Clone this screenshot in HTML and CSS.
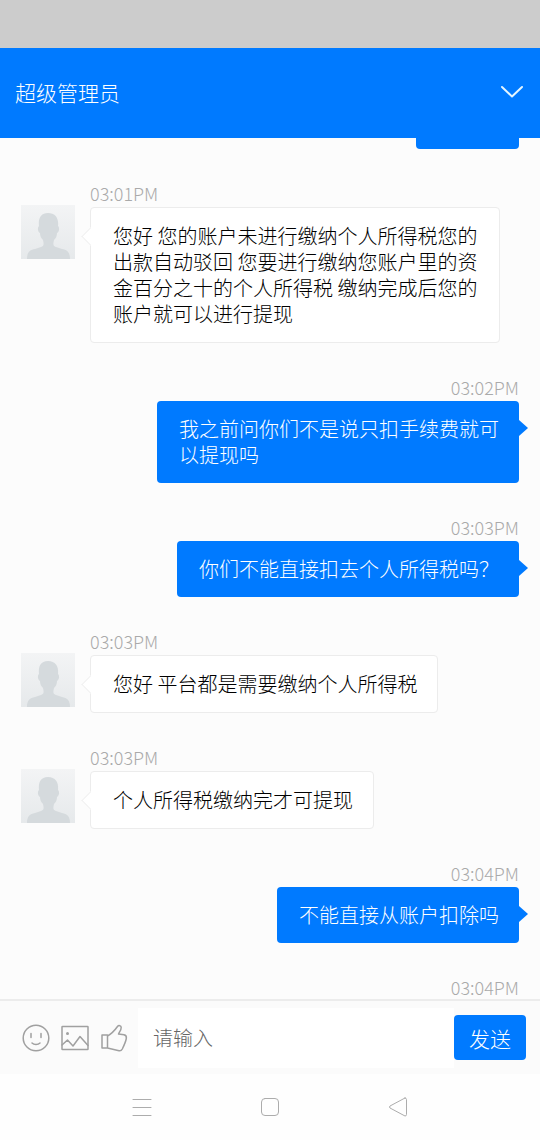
FILE: index.html
```html
<!DOCTYPE html>
<html lang="zh-CN">
<head>
<meta charset="utf-8">
<meta name="viewport" content="width=device-width, initial-scale=1">
<title>超级管理员</title>
<link rel="stylesheet" href="styles.css">
</head>
<body>
<svg class="defs" aria-hidden="true">
  <defs>
    <linearGradient id="avatar-bg" x1="0" y1="0" x2="0" y2="1">
      <stop offset="0" stop-color="#f3f4f5"/>
      <stop offset="1" stop-color="#e6e9eb"/>
    </linearGradient>
    <symbol id="avatar" viewBox="0 0 54 54">
      <rect width="54" height="54" fill="url(#avatar-bg)"/>
      <path d="M6 54c0-7 3-9 8-10l6-2c3-1 3-3 2-7-2-2-3-4-3-7-2-1-3-5-1-7-1-8 2-13 9-13s11 5 10 13c2 2 1 6-1 7 0 3-1 5-3 7-1 4-1 6 2 7l6 2c5 1 8 3 8 10z" fill="#d5dadd"/>
    </symbol>
  </defs>
</svg>
<div class="status-bar"></div>
<header class="header">
  <h1 class="title">超级管理员</h1>
  <button class="collapse" type="button" aria-label="收起">
    <svg width="24" height="14" viewBox="0 0 24 14"><path d="M2 2l10 9.500L22 2"/></svg>
  </button>
</header>
<main class="chat">
  <div class="message message-out">
    <div class="bubble bubble-cut"></div>
  </div>
  <article class="message message-in">
    <time class="time">03:01PM</time>
    <svg class="avatar" role="img" aria-label="头像"><use href="#avatar"/></svg>
    <p class="bubble">您好 您的账户未进行缴纳个人所得税您的出款自动驳回 您要进行缴纳您账户里的资金百分之十的个人所得税 缴纳完成后您的账户就可以进行提现</p>
  </article>
  <article class="message message-out">
    <time class="time">03:02PM</time>
    <p class="bubble">我之前问你们不是说只扣手续费就可以提现吗</p>
  </article>
  <article class="message message-out">
    <time class="time">03:03PM</time>
    <p class="bubble">你们不能直接扣去个人所得税吗？</p>
  </article>
  <article class="message message-in">
    <time class="time">03:03PM</time>
    <svg class="avatar" role="img" aria-label="头像"><use href="#avatar"/></svg>
    <p class="bubble">您好 平台都是需要缴纳个人所得税</p>
  </article>
  <article class="message message-in">
    <time class="time">03:03PM</time>
    <svg class="avatar" role="img" aria-label="头像"><use href="#avatar"/></svg>
    <p class="bubble">个人所得税缴纳完才可提现</p>
  </article>
  <article class="message message-out">
    <time class="time">03:04PM</time>
    <p class="bubble">不能直接从账户扣除吗</p>
  </article>
  <article class="message message-out">
    <time class="time">03:04PM</time>
  </article>
</main>
<form class="composer">
  <div class="tools">
    <button class="tool" type="button" aria-label="表情">
      <svg width="28" height="28" viewBox="0 0 28 28"><circle cx="14" cy="14" r="12.800"/><path d="M9 9.500v4M19 9.500v4M10 19c2 2 6 2 8 0"/></svg>
    </button>
    <button class="tool" type="button" aria-label="图片">
      <svg width="28" height="28" viewBox="0 0 28 28"><rect x="1" y="2.500" width="26" height="23" rx=".5"/><path d="M1 21l5.500-5 5.500 6 7-9.500 8 9"/><circle class="dot" cx="6.500" cy="9.500" r="1.500"/></svg>
    </button>
    <button class="tool" type="button" aria-label="点赞">
      <svg width="28" height="28" viewBox="0 0 28 28"><path d="M2 11h5.500v13H2zM7.500 12c4.500-2.500 7.500-6 10-9.500 1.200-1.500 3.500-1 3.700.8.200 2.200-1.700 4.700-2.700 6.700l5.500.8c2 .5 2.700 1.700 2.300 3.700-.6 3.500-2.300 7-4 10.500-.8 1.500-1.800 2-3.300 1.700L7.500 24"/></svg>
    </button>
  </div>
  <input class="field" type="text" placeholder="请输入" aria-label="请输入">
  <button class="send" type="submit">发送</button>
</form>
<nav class="system-nav" aria-label="系统导航">
  <button class="nav-button" type="button" aria-label="菜单">
    <svg width="20" height="20" viewBox="0 0 20 20"><path d="M1 2.500h18M1 10.500h18M1 18.500h18"/></svg>
  </button>
  <button class="nav-button" type="button" aria-label="主页">
    <svg width="20" height="20" viewBox="0 0 20 20"><rect x="1.500" y="1.500" width="17" height="17" rx="3.500"/></svg>
  </button>
  <button class="nav-button" type="button" aria-label="返回">
    <svg width="20" height="20" viewBox="0 0 20 20"><path d="M17 1L2 9q-1 1 0 2l15 8q1.500 0 1.500-1.500v-15Q18.500 1 17 1z"/></svg>
  </button>
</nav>
</body>
</html>
```
FILE: styles.css
```css
* {
  box-sizing: border-box;
}

body {
  display: flex;
  flex-direction: column;
  height: 100vh;
  margin: 0;
  background: #fcfcfc;
  color: #000;
  font-family: "Noto Sans CJK SC", sans-serif;
  font-size: 20px;
  font-weight: 300;
  line-height: 26px;
}

button,
input {
  padding: 0;
  border: 0;
  background: none;
  font: inherit;
}

svg {
  display: block;
  fill: none;
  stroke-linecap: round;
  stroke-linejoin: round;
}

.defs {
  position: absolute;
  width: 0;
  height: 0;
}

.status-bar {
  flex: none;
  height: 48px;
  background: #ccc;
}

.header {
  display: flex;
  flex: none;
  align-items: center;
  justify-content: space-between;
  height: 90px;
  padding: 0 16px 2px 15px;
  background: #007aff;
  color: #fff;
}

.title {
  margin: 0;
  font-size: 21px;
  font-weight: 300;
}

.collapse svg {
  stroke: #e4f6ff;
  stroke-width: 2;
}

.chat {
  display: flex;
  flex: 1;
  flex-direction: column;
  gap: 32px;
  min-height: 0;
  overflow: hidden;
}

.message {
  display: grid;
  flex: none;
  padding: 0 21px;
}

.message-in {
  grid-template-columns: 54px 1fr;
  column-gap: 15px;
  justify-items: start;
  padding-right: 40px;
}

.message-out {
  justify-items: end;
  padding-left: 157px;
}

.time {
  color: #aaa;
  font-size: 18px;
  line-height: 24px;
}

.message-in .time {
  grid-column: 2;
}

.avatar {
  width: 54px;
  height: 54px;
}

.bubble {
  position: relative;
  margin: 2px 0 0;
  padding: 15px 20px 15px 22px;
  border-radius: 4px;
}

.message-in .bubble {
  border: 1px solid #ececec;
  background: #fff;
}

.message-out .bubble {
  background: #007aff;
  color: #fff;
}

.bubble::after {
  position: absolute;
  content: "";
}

.message-in .bubble::after {
  top: 22px;
  left: -7px;
  width: 12px;
  height: 12px;
  border: solid #f0f0f0;
  border-width: 0 0 1px 1px;
  background: #fff;
  transform: rotate(45deg);
}

.message-out .bubble::after {
  top: 19px;
  right: -9px;
  border: solid transparent;
  border-width: 8px 0 8px 9px;
  border-left-color: #007aff;
}

.message-out .bubble-cut {
  width: 103px;
  height: 11px;
  margin: 0;
  padding: 0;
  border-radius: 0 0 4px 4px;
}

.message-out .bubble-cut::after {
  display: none;
}

.composer {
  display: flex;
  flex: none;
  align-items: center;
  height: 75px;
  padding: 0 14px 0 22px;
  border-top: 2px solid #ececec;
  background: #fbfbfb;
}

.tools {
  display: flex;
  gap: 11px;
  margin-right: 10px;
}

.tool svg {
  stroke: #a0a0a0;
  stroke-width: 1.5;
}

.tool .dot {
  fill: #a0a0a0;
  stroke: none;
}

.field {
  flex: 1;
  min-width: 0;
  height: 60px;
  padding: 0 15px;
  background: #fff;
}

.field::placeholder {
  color: #666;
}

.send {
  width: 72px;
  height: 45px;
  border-radius: 4px;
  background: #007aff;
  color: #fff;
  font-size: 21px;
}

.system-nav {
  display: flex;
  flex: none;
  align-items: center;
  justify-content: center;
  gap: 108px;
  height: 66px;
  background: #fefefe;
}

.nav-button svg {
  stroke: #acacac;
  stroke-width: 1;
}
```
